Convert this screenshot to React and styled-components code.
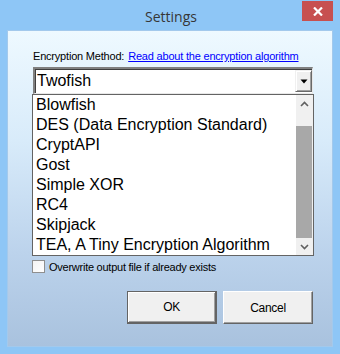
import React from "react";
import styled, { createGlobalStyle } from "styled-components";

const Global = createGlobalStyle`
  html, body { margin: 0; padding: 0; }
  body { width: 340px; height: 354px; overflow: hidden; background: #8ec6f6; }
  #root { width: 340px; height: 354px; }
`;

const Window = styled.div`
  width: 340px;
  height: 354px;
  box-sizing: border-box;
  background: #8ec6f6;
  padding: 0 7px 7px 7px;
  display: flex;
  flex-direction: column;
  font-family: "Liberation Sans", Arial, sans-serif;
`;

const TitleBar = styled.div`
  position: relative;
  height: 30px;
  flex: none;
  display: flex;
  align-items: center;
  justify-content: center;
`;

const Title = styled.div`
  font-family: "Open Sans", "Noto Sans", sans-serif;
  font-size: 14px;
  color: #363636;
  margin-top: 2px;
  margin-left: 2px;
`;

const CloseButton = styled.div`
  position: absolute;
  top: 1px;
  right: 0;
  width: 31px;
  height: 20px;
  background: #c75050;
  display: flex;
  align-items: center;
  justify-content: center;
`;

const Client = styled.div`
  flex: 1;
  border: 1px solid #a3c9ec;
  background: linear-gradient(to bottom, #eef9ff 0%, #d8ebfa 35%, #bcd3ec 70%, #a9c2de 100%);
  padding: 18px 0 0 24px;
  display: flex;
  flex-direction: column;
  align-items: flex-start;
`;

const LabelRow = styled.div`
  font-size: 11px;
  letter-spacing: -0.2px;
  line-height: 14px;
  color: #000;
  margin-left: 1px;
  display: flex;
  gap: 4px;
`;

const Link = styled.a`
  color: #0000ff;
  text-decoration: underline;
  cursor: pointer;
`;

const Combo = styled.div`
  margin-top: 4px;
  margin-left: 1px;
  width: 280px;
  height: 27px;
  box-sizing: border-box;
  background: #fff;
  border-top: 2px solid #808080;
  border-left: 2px solid #808080;
  border-right: 1px solid #e8e8e8;
  border-bottom: 1px solid #e8e8e8;
  box-shadow: inset 1px 1px 0 #404040;
  display: flex;
  align-items: stretch;
`;

const ComboText = styled.div`
  flex: 1;
  font-size: 16px;
  line-height: 24px;
  padding-left: 2px;
  color: #000;
`;

const DropButton = styled.div`
  width: 17px;
  margin: 1px 0 1px 0;
  box-sizing: border-box;
  background: #f0f0f0;
  border-top: 1px solid #f0f0f0;
  border-left: 1px solid #f0f0f0;
  border-right: 1px solid #696969;
  border-bottom: 1px solid #696969;
  box-shadow: inset 1px 1px 0 #fff, inset -1px -1px 0 #a0a0a0;
  display: flex;
  align-items: center;
  justify-content: center;
`;

const ListBox = styled.div`
  width: 282px;
  height: 162px;
  box-sizing: border-box;
  border: 1px solid #646464;
  background: #fff;
  display: flex;
`;

const Items = styled.div`
  flex: 1;
  display: flex;
  flex-direction: column;
`;

const Item = styled.div`
  height: 20px;
  line-height: 20px;
  font-size: 16px;
  padding-left: 3px;
  color: #000;
  white-space: nowrap;
`;

const ScrollBar = styled.div`
  width: 17px;
  background: #f0f0f0;
  display: flex;
  flex-direction: column;
`;

const ScrollArrow = styled.div`
  height: 17px;
  display: flex;
  align-items: center;
  justify-content: center;
`;

const Track = styled.div`
  flex: 1;
  display: flex;
  flex-direction: column;
  padding: 14px 1px 0 0;
`;

const Thumb = styled.div`
  height: 112px;
  background: #a8a8a8;
`;

const CheckRow = styled.label`
  margin-top: 4px;
  display: flex;
  align-items: center;
  gap: 4px;
  font-size: 11px;
  letter-spacing: -0.25px;
  color: #000;
`;

const CheckBox = styled.span`
  width: 13px;
  height: 13px;
  box-sizing: border-box;
  border: 1px solid #8f8f8f;
  background: linear-gradient(135deg, #f4f4f4, #ffffff);
  display: inline-block;
`;

const ButtonRow = styled.div`
  margin-top: 18px;
  align-self: stretch;
  display: flex;
  justify-content: flex-end;
  gap: 6px;
  padding-right: 19px;
`;

const Button = styled.div`
  width: 90px;
  height: 33px;
  box-sizing: border-box;
  background: #f0f0f0;
  display: flex;
  align-items: center;
  justify-content: center;
  font-size: 12px;
  letter-spacing: -0.3px;
  color: #000;
  border-top: 1px solid ${(p) => (p.$default ? "#646464" : "#ffffff")};
  border-left: 1px solid ${(p) => (p.$default ? "#646464" : "#ffffff")};
  border-right: ${(p) => (p.$default ? "2px" : "1px")} solid #646464;
  border-bottom: ${(p) => (p.$default ? "2px" : "1px")} solid #646464;
  box-shadow: ${(p) =>
    p.$default
      ? "inset 1px 1px 0 #fff, inset -1px -1px 0 #a0a0a0"
      : "inset -1px -1px 0 #a0a0a0"};
`;

const items = [
  "Blowfish",
  "DES (Data Encryption Standard)",
  "CryptAPI",
  "Gost",
  "Simple XOR",
  "RC4",
  "Skipjack",
  "TEA, A Tiny Encryption Algorithm",
];

export default function App() {
  return (
    <>
      <Global />
      <Window>
        <TitleBar>
          <Title>Settings</Title>
          <CloseButton>
            <svg width="10" height="9" viewBox="0 0 10 9">
              <path d="M1 0.5 L9 8.5 M9 0.5 L1 8.5" stroke="#fff" strokeWidth="2.2" />
            </svg>
          </CloseButton>
        </TitleBar>
        <Client>
          <LabelRow>
            <span>Encryption Method:</span>
            <Link>Read about the encryption algorithm</Link>
          </LabelRow>
          <Combo>
            <ComboText>Twofish</ComboText>
            <DropButton>
              <svg width="8" height="5" viewBox="0 0 8 5">
                <path d="M0.5 0.5 H7.5 L4 4.5 Z" fill="#000" />
              </svg>
            </DropButton>
          </Combo>
          <ListBox>
            <Items>
              {items.map((t) => (
                <Item key={t}>{t}</Item>
              ))}
            </Items>
            <ScrollBar>
              <ScrollArrow>
                <svg width="9" height="6" viewBox="0 0 9 6">
                  <path d="M1 5 L4.5 1.5 L8 5" stroke="#606060" strokeWidth="1.6" fill="none" />
                </svg>
              </ScrollArrow>
              <Track>
                <Thumb />
              </Track>
              <ScrollArrow>
                <svg width="9" height="6" viewBox="0 0 9 6">
                  <path d="M1 1 L4.5 4.5 L8 1" stroke="#606060" strokeWidth="1.6" fill="none" />
                </svg>
              </ScrollArrow>
            </ScrollBar>
          </ListBox>
          <CheckRow>
            <CheckBox />
            <span>Overwrite output file if already exists</span>
          </CheckRow>
          <ButtonRow>
            <Button $default>OK</Button>
            <Button>Cancel</Button>
          </ButtonRow>
        </Client>
      </Window>
    </>
  );
}
